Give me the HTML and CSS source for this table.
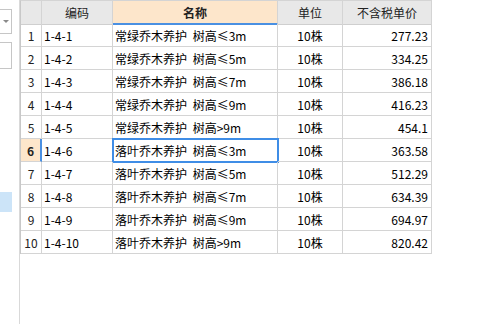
FILE: index.html
```html
<!DOCTYPE html>
<html lang="zh-CN">
<head>
    <meta charset="UTF-8">
    <title>定额单价</title>
    <link rel="stylesheet" href="styles.css">
</head>
<body>
    <!-- Left filter panel (mostly scrolled out of view) -->
    <div class="side">
        <div class="side-select"><span class="arrow"></span></div>
        <div class="side-input"></div>
        <div class="side-item"></div>
    </div>

    <!-- Price grid -->
    <div class="grid">
        <div class="hd"></div>
        <div class="hd">编码</div>
        <div class="hd hd-active">名称</div>
        <div class="hd">单位</div>
        <div class="hd">不含税单价</div>

        <div class="num">1</div><div class="code">1-4-1</div><div class="name">常绿乔木养护 树高≤3m</div><div class="unit">10株</div><div class="price">277.23</div>
        <div class="num">2</div><div class="code">1-4-2</div><div class="name">常绿乔木养护 树高≤5m</div><div class="unit">10株</div><div class="price">334.25</div>
        <div class="num">3</div><div class="code">1-4-3</div><div class="name">常绿乔木养护 树高≤7m</div><div class="unit">10株</div><div class="price">386.18</div>
        <div class="num">4</div><div class="code">1-4-4</div><div class="name">常绿乔木养护 树高≤9m</div><div class="unit">10株</div><div class="price">416.23</div>
        <div class="num">5</div><div class="code">1-4-5</div><div class="name">常绿乔木养护 树高&gt;9m</div><div class="unit">10株</div><div class="price">454.1</div>
        <div class="num num-active">6</div><div class="code">1-4-6</div><div class="name name-active">落叶乔木养护 树高≤3m</div><div class="unit">10株</div><div class="price">363.58</div>
        <div class="num">7</div><div class="code">1-4-7</div><div class="name">落叶乔木养护 树高≤5m</div><div class="unit">10株</div><div class="price">512.29</div>
        <div class="num">8</div><div class="code">1-4-8</div><div class="name">落叶乔木养护 树高≤7m</div><div class="unit">10株</div><div class="price">634.39</div>
        <div class="num">9</div><div class="code">1-4-9</div><div class="name">落叶乔木养护 树高≤9m</div><div class="unit">10株</div><div class="price">694.97</div>
        <div class="num">10</div><div class="code">1-4-10</div><div class="name">落叶乔木养护 树高&gt;9m</div><div class="unit">10株</div><div class="price">820.42</div>
    </div>
</body>
</html>
```

FILE: styles.css
```css
/* Base */
* {
    box-sizing: border-box;
    margin: 0;
    padding: 0;
}

body {
    display: flex;
    align-items: flex-start;
    height: 324px;
    overflow: hidden;
    background: #ffffff;
    font-family: "Noto Sans CJK SC", "Liberation Sans", sans-serif;
    font-size: 12px;
    color: #000000;
}

/* Side panel */
.side {
    width: 20px;
    height: 100%;
    flex-shrink: 0;
    border-right: 1px solid #d9d9d9;
    padding-top: 9px;
    display: flex;
    flex-direction: column;
}

.side-select,
.side-input {
    width: 13px;
    height: 25px;
    margin-left: -1px;
    border: 1px solid #c6c6c6;
    background: #ffffff;
}

.side-select {
    display: flex;
    align-items: center;
    padding-left: 3px;
}

.side-select .arrow {
    width: 0;
    height: 0;
    border-left: 3px solid transparent;
    border-right: 3px solid transparent;
    border-top: 3px solid #8a8a8a;
}

.side-input {
    margin-top: 8px;
    height: 27px;
}

.side-item {
    width: 12px;
    height: 20px;
    margin-top: 123px;
    background: #cce4f8;
}

/* Grid */
.grid {
    display: grid;
    grid-template-columns: 21px 71px 165px 65px 89px;
    grid-auto-rows: 23px;
    border-left: 1px solid #c8c8c8;
    border-top: 1px solid #d4d4d4;
}

.grid > div {
    border-right: 1px solid #d4d4d4;
    border-bottom: 1px solid #d4d4d4;
    display: flex;
    align-items: center;
    white-space: nowrap;
    overflow: visible;
}

.grid > .hd {
    height: 24px;
    justify-content: center;
    background: #e8e8e8;
    color: #222222;
    border-bottom-color: #cfcfcf;
}

.grid > .hd-active {
    background: #fde6cb;
    font-weight: bold;
    border-bottom: 2px solid #4a90e2;
}

.num {
    justify-content: center;
    color: #222222;
}

.grid > .num-active {
    background: #fde6cb;
    font-weight: bold;
    border-right: 2px solid #4a90e2;
}

.code {
    padding-left: 2px;
}

.name {
    padding-left: 2px;
    word-spacing: 3px;
}

.grid > .name-active {
    outline: 2px solid #3f8de6;
    outline-offset: -1px;
}

.unit {
    justify-content: center;
}

.price {
    justify-content: flex-end;
    padding-right: 3px;
}
```
